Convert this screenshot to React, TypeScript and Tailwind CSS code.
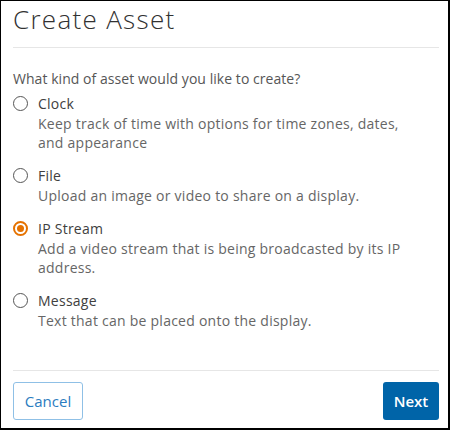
import React, { useState } from "react";

const options = [
  { id: "clock", label: "Clock", desc: "Keep track of time with options for time zones, dates, and appearance" },
  { id: "file", label: "File", desc: "Upload an image or video to share on a display." },
  { id: "ip", label: "IP Stream", desc: "Add a video stream that is being broadcasted by its IP address." },
  { id: "message", label: "Message", desc: "Text that can be placed onto the display." },
];

export default function App() {
  const [sel, setSel] = useState("ip");
  return (
    <div
      className="w-[450px] h-[430px] bg-white border-l border-t border-r-2 border-b-2 border-black flex flex-col"
      style={{ fontFamily: "'Open Sans', Lato, sans-serif" }}
    >
      <div className="pl-[12px] pr-[9px]">
        <div className="h-[46px] flex items-start">
          <h1 className="text-[26px] leading-[37px] font-light tracking-[1.3px] text-[#313131]">Create Asset</h1>
        </div>
        <div className="h-px bg-[#e6e6e6]" />
        <p className="mt-[21px] text-[14px] leading-[20px] tracking-[0.05px] text-[#565656]">
          What kind of asset would you like to create?
        </p>
        <div className="mt-[5px] flex flex-col gap-[14px]">
          {options.map((o) => {
            const active = sel === o.id;
            return (
              <label key={o.id} className="flex items-start gap-[10px] cursor-pointer" onClick={() => setSel(o.id)}>
                <span className="mt-[2px] shrink-0 w-[15px] h-[15px] flex items-center justify-center">
                  <span
                    className={
                      active
                        ? "w-[15px] h-[15px] rounded-full border-2 border-[#e57200] flex items-center justify-center"
                        : "w-[15px] h-[15px] rounded-full border-[1.5px] border-[#555555]"
                    }
                  >
                    {active && <span className="w-[7px] h-[7px] rounded-full bg-[#e57200]" />}
                  </span>
                </span>
                <span className="flex flex-col pr-[16px]">
                  <span className="text-[14px] leading-[20px] tracking-[0.25px] text-[#404040]">{o.label}</span>
                  <span className="text-[14px] leading-[19px] tracking-[0.25px] text-[#666666]">{o.desc}</span>
                </span>
              </label>
            );
          })}
        </div>
      </div>
      <div className="flex-1" />
      <div className="pl-[12px] pr-[9px]">
        <div className="h-px bg-[#e6e6e6]" />
        <div className="flex justify-between items-center pt-[11px] pb-[8px]">
          <button className="h-[38px] w-[70px] rounded-[3px] border border-[#8fc0e6] text-[#2b7cc0] text-[15px] bg-white">
            Cancel
          </button>
          <button className="h-[38px] w-[56px] rounded-[3px] bg-[#0064a8] text-white text-[15px] font-semibold">
            Next
          </button>
        </div>
      </div>
    </div>
  );
}
